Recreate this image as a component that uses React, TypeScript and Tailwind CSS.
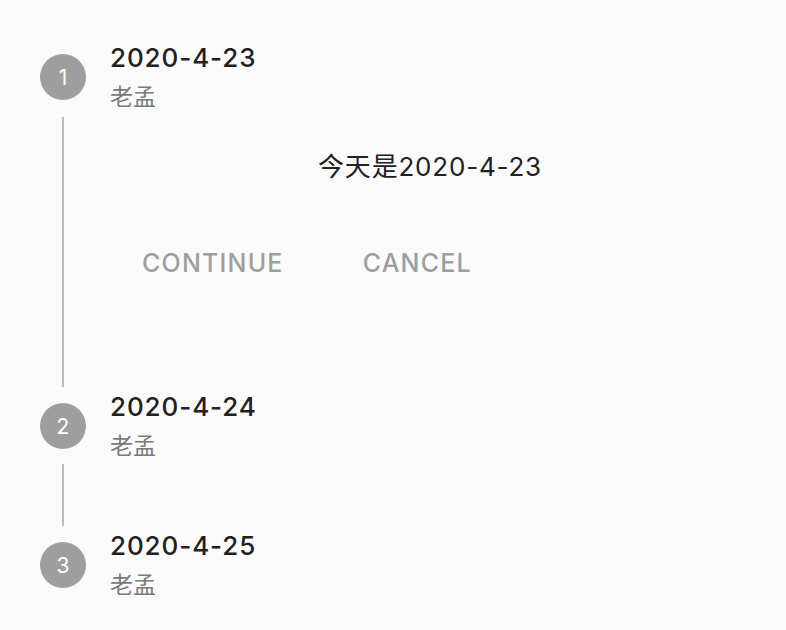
import React from "react";

const font = { fontFamily: '"Inter", "Noto Sans CJK SC", sans-serif' };

function Circle({ n }: { n: number }) {
  return (
    <div className="w-[86px] pl-[40px] shrink-0">
      <div className="w-[46px] h-[46px] rounded-full bg-[#9e9e9e] flex items-center justify-center text-white text-[21px] leading-none">
        {n}
      </div>
    </div>
  );
}

function Header({ n, title }: { n: number; title: string }) {
  return (
    <div className="flex items-center h-[46px]">
      <Circle n={n} />
      <div className="ml-[24px] flex flex-col">
        <div className="text-[26px] leading-[38px] mt-[3px] text-[#212121] font-medium tracking-[0.9px]">{title}</div>
        <div className="text-[23px] leading-[41px] text-[#7a7a7a]">老孟</div>
      </div>
    </div>
  );
}

function Rail({ top, bottom }: { top: number; bottom: number }) {
  return (
    <div className="w-[86px] pl-[40px] shrink-0 flex">
      <div className="w-[46px] flex justify-center">
        <div
          className="w-[2px] bg-[#bdbdbd]"
          style={{ marginTop: top, marginBottom: bottom }}
        />
      </div>
    </div>
  );
}

export default function App() {
  return (
    <div className="min-h-screen w-full bg-[#fafafa] pt-[54px]" style={font}>
      <Header n={1} title="2020-4-23" />
      <div className="flex h-[303px]">
        <Rail top={17} bottom={16} />
        <div className="ml-[24px] pr-[36px] flex-1 flex flex-col">
          <div className="mt-[50px] text-center text-[26px] leading-[34px] text-[#212121] tracking-[0.8px]">
            今天是2020-4-23
          </div>
          <div className="mt-[56px] flex gap-[15px]">
            <button className="h-[48px] px-[32px] text-[25px] font-medium text-[#9e9e9e] tracking-[1.2px]">CONTINUE</button>
            <button className="h-[48px] px-[32px] text-[25px] font-medium text-[#9e9e9e] tracking-[1.2px]">CANCEL</button>
          </div>
        </div>
      </div>
      <Header n={2} title="2020-4-24" />
      <div className="flex h-[93px]">
        <Rail top={15} bottom={16} />
      </div>
      <Header n={3} title="2020-4-25" />
    </div>
  );
}
